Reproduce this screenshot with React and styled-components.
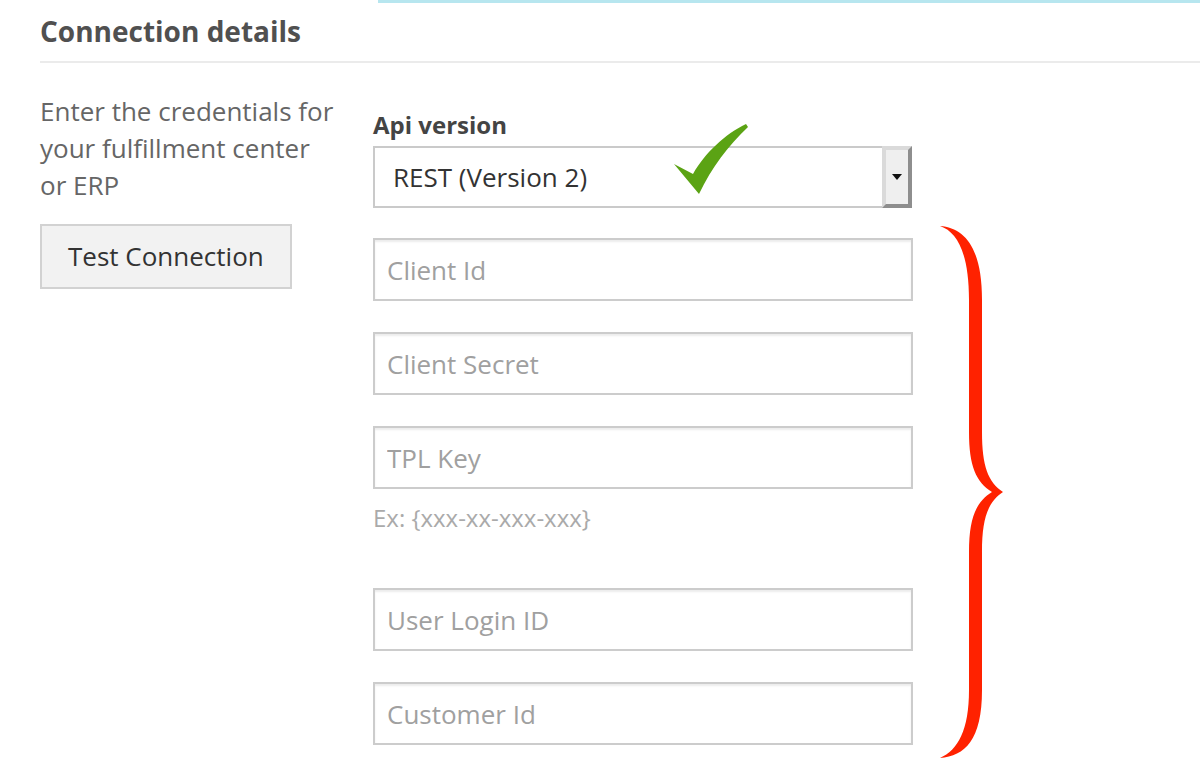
import React from 'react';
import styled, { createGlobalStyle } from 'styled-components';

const GlobalStyle = createGlobalStyle`
  body {
    margin: 0;
    background: #fff;
    font-family: "Open Sans", "Liberation Sans", sans-serif;
  }
`;

const Page = styled.div`
  padding-left: 40px;
  overflow: hidden;
`;

const TopAccent = styled.div`
  margin-left: 338px;
  height: 3px;
  background: #b7e6ef;
`;

const Header = styled.div`
  margin-top: 8px;
  padding-bottom: 10px;
  border-bottom: 2px solid #ebebeb;
`;

const Title = styled.h2`
  margin: 0;
  font-size: 28px;
  line-height: 40px;
  font-weight: 700;
  color: #505050;
`;

const Body = styled.div`
  display: flex;
`;

const Sidebar = styled.div`
  width: 333px;
  flex-shrink: 0;
  padding-top: 30px;
`;

const Intro = styled.p`
  margin: 0;
  width: 298px;
  font-size: 26px;
  line-height: 37px;
  color: #666;
`;

const Button = styled.button`
  margin-top: 20px;
  padding: 12px 26px;
  background: #f2f2f2;
  border: 2px solid #d2d2d2;
  border-radius: 0;
  font-family: inherit;
  font-size: 26px;
  line-height: 37px;
  color: #333;
`;

const FormColumn = styled.div`
  padding-top: 43px;
`;

const Label = styled.label`
  display: block;
  margin-bottom: 3px;
  font-size: 24px;
  line-height: 37px;
  font-weight: 700;
  color: #444;
`;

const SelectWrap = styled.div`
  position: relative;
  width: 539px;
  margin-bottom: 30px;
`;

const SelectBox = styled.div`
  display: flex;
  box-sizing: border-box;
  height: 62px;
  border: 2px solid #cacaca;
  background: #fff;
`;

const SelectValue = styled.span`
  flex: 1;
  padding-left: 18px;
  font-size: 26px;
  line-height: 58px;
  color: #333;
`;

const ArrowButton = styled.span`
  display: flex;
  align-items: center;
  justify-content: center;
  width: 22px;
  background: #efefef;
  border-style: solid;
  border-width: 4px;
  border-color: #dadada #8e8e8e #8e8e8e #dadada;
  margin: -2px -2px -2px 0;
`;

const Caret = styled.span`
  width: 0;
  height: 0;
  border-left: 5px solid transparent;
  border-right: 5px solid transparent;
  border-top: 6px solid #111;
`;

const CheckMark = styled.svg`
  position: absolute;
  left: 297px;
  top: -26px;
`;

const FieldsRow = styled.div`
  display: flex;
  align-items: flex-start;
`;

const Fields = styled.div`
  width: 540px;
  display: flex;
  flex-direction: column;
`;

const Field = styled.div`
  margin-bottom: ${(p) => (p.last ? '0' : '31px')};
`;

const Input = styled.input`
  display: block;
  box-sizing: border-box;
  width: 100%;
  height: 63px;
  padding: 0 12px;
  border: 2px solid #cccccc;
  border-radius: 0;
  box-shadow: inset 0 2px 2px rgba(0, 0, 0, 0.075);
  font-family: inherit;
  font-size: 26px;
  color: #333;
  outline: none;

  &::placeholder {
    color: #a0a0a0;
  }
`;

const Hint = styled.div`
  margin-top: 12px;
  margin-bottom: 22px;
  font-size: 24px;
  line-height: 34px;
  color: #aaa;
`;

const Brace = styled.svg`
  flex-shrink: 0;
  margin-left: 17px;
  margin-top: -18px;
`;

const fields = [
  { placeholder: 'Client Id' },
  { placeholder: 'Client Secret' },
  { placeholder: 'TPL Key', hint: 'Ex: {xxx-xx-xxx-xxx}' },
  { placeholder: 'User Login ID' },
  { placeholder: 'Customer Id' },
];

export default function App() {
  return (
    <>
      <GlobalStyle />
      <Page>
        <TopAccent />
        <Header>
          <Title>Connection details</Title>
        </Header>
        <Body>
          <Sidebar>
            <Intro>Enter the credentials for your fulfillment center or ERP</Intro>
            <Button>Test Connection</Button>
          </Sidebar>
          <FormColumn>
            <Label>Api version</Label>
            <SelectWrap>
              <SelectBox>
                <SelectValue>REST (Version 2)</SelectValue>
                <ArrowButton>
                  <Caret />
                </ArrowButton>
              </SelectBox>
              <CheckMark width="80" height="76" viewBox="0 0 80 76">
                <path
                  d="M4,44 L23,54 C35,33 55,14 76,4 L78,7 C58,26 42,47 29,74 Z"
                  fill="#5ba314"
                />
              </CheckMark>
            </SelectWrap>
            <FieldsRow>
              <Fields>
                {fields.map((f, i) => (
                  <Field key={f.placeholder} last={i === fields.length - 1}>
                    <Input placeholder={f.placeholder} />
                    {f.hint && <Hint>{f.hint}</Hint>}
                  </Field>
                ))}
              </Fields>
              <Brace width="80" height="545" viewBox="0 0 80 545">
                <path
                  d="M10,6 C35,8 52,28 52,80 L52,212 C52,246 58,262 73,272 C58,282 52,298 52,332 L52,470 C52,520 35,536 10,538 C28,530 39,510 39,470 L39,332 C39,298 46,282 62,272 C46,262 39,246 39,212 L39,80 C39,35 28,12 10,6 Z"
                  fill="#ff2200"
                />
              </Brace>
            </FieldsRow>
          </FormColumn>
        </Body>
      </Page>
    </>
  );
}
